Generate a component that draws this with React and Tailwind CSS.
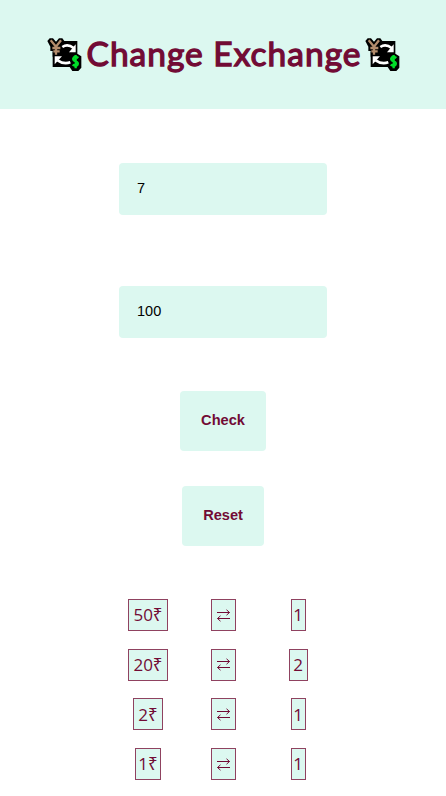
import { useState } from "react";

function ExchangeIcon() {
  return (
    <svg className="h-9 w-9 shrink-0" viewBox="20 20 108 108" aria-hidden="true">
      <path d="M50 38L64 32H111V70L123 78V112L114 122H96L88 110H37V64H52Z" fill="#000" />
      <path d="M21 32L28 24H38L47 34L56 24H66L72 32L64 50L68 56V79H37V62H30V49Z" fill="#000" />
      <path d="M66 50Q82 39 100 53" fill="none" stroke="#fff" strokeWidth="8" />
      <path d="M106 42V66H86Z" fill="#fff" />
      <path d="M52 90Q70 103 90 96" fill="none" stroke="#fff" strokeWidth="8" />
      <path d="M43 78H65L43 102Z" fill="#fff" />
      <path d="M31 30L47 49L62 30M47 47V73M36 53H60M39 63H58" fill="none" stroke="#b38c6c" strokeWidth="7" />
      <path d="M114 83Q105 76 100 82Q95 89 106 93Q116 97 111 104Q105 109 97 103M106 74V114" fill="none" stroke="#00dc28" strokeWidth="7" />
    </svg>
  );
}

function SwapArrows() {
  return (
    <svg className="h-[13px] w-[15px]" viewBox="0 0 15 13" fill="none" stroke="currentColor" aria-label="⇄">
      <path d="M1 3.5H13.5M10.5 .8L13.5 3.5L10.5 6.2M14 9.5H1.5M4.5 6.8L1.5 9.5L4.5 12.2" />
    </svg>
  );
}

const rows = [
  { note: "50₹", count: "1", noteWidth: "w-10", countWidth: "w-[15px]" },
  { note: "20₹", count: "2", noteWidth: "w-10", countWidth: "w-[19px]" },
  { note: "2₹", count: "1", noteWidth: "w-[30px]", countWidth: "w-[15px]" },
  { note: "1₹", count: "1", noteWidth: "w-[26px]", countWidth: "w-[15px]" },
];

const box =
  "flex h-8 items-center justify-center border border-[#8f4260] bg-[#dcf8f0] whitespace-nowrap";

const field =
  "block h-[52px] w-[208px] rounded bg-[#dcf8f0] px-[18px] pb-0.5 text-[14.5px] text-black outline-none font-['Liberation_Sans',sans-serif]";

const button =
  "h-[60px] rounded bg-[#dcf8f0] text-[14.6px] font-bold font-['Liberation_Sans',sans-serif]";

export default function App() {
  const [bill, setBill] = useState("7");
  const [cash, setCash] = useState("100");

  return (
    <div className="flex h-[796px] w-[446px] flex-col items-center overflow-hidden bg-white text-[#720b35]">
      <header className="flex h-[109px] w-full items-center justify-center gap-[2px] bg-[#dcf8f0] pl-[2px]">
        <ExchangeIcon />
        <h1 className="w-[278px] pb-0.5 text-center text-[33.5px] whitespace-nowrap tracking-[1px] [-webkit-text-stroke:1.3px_#720b35] [stroke-linejoin:round] font-['Lato',sans-serif]">
          Change Exchange
        </h1>
        <ExchangeIcon />
      </header>
      <main className="flex flex-col items-center pt-[54px]">
        <input className={field} value={bill} onChange={(e) => setBill(e.target.value)} />
        <input className={`${field} mt-[71px]`} value={cash} onChange={(e) => setCash(e.target.value)} />
        <button className={`${button} mt-[53px] w-[86px]`}>Check</button>
        <button className={`${button} mt-[35px] w-[82px]`}>Reset</button>
        <div className="mt-[53px] flex flex-col gap-[17.7px] text-[17px] font-normal font-['Open_Sans','Noto_Sans',sans-serif]">
          {rows.map((row) => (
            <div key={row.note} className="grid grid-cols-[75px_75px_75px] justify-items-center">
              <span className={`${box} ${row.noteWidth}`}>{row.note}</span>
              <span className={`${box} w-[25px]`}>
                <SwapArrows />
              </span>
              <span className={`${box} ${row.countWidth}`}>{row.count}</span>
            </div>
          ))}
        </div>
      </main>
    </div>
  );
}
